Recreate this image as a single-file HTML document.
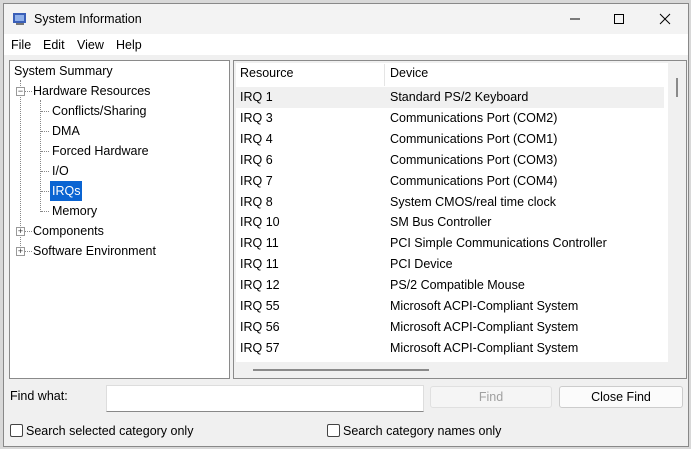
<!DOCTYPE html>
<html><head><style>
*{margin:0;padding:0;box-sizing:border-box}
body{width:691px;height:449px;background:#d8d8d8;font-family:"Liberation Sans",sans-serif;font-size:12.5px;color:#000;position:relative;overflow:hidden}
.win{position:absolute;left:3px;top:3px;width:686px;height:444px;background:#f0f0f0;border:1px solid #888}
.abs{position:absolute;white-space:nowrap}
.title{position:absolute;left:0;top:0;width:100%;height:30px;background:#f3f3f3}
.menu{position:absolute;left:0;top:30px;width:100%;height:21px;background:#fff}
.tree{position:absolute;left:5px;top:56px;width:221px;height:319px;background:#fff;border:1px solid #8a8a8a}
.tin{position:absolute;left:-3px;top:-1px;width:220px;height:300px}
.list{position:absolute;left:229px;top:56px;width:454px;height:319px;background:#f0f0f0;border:1px solid #8a8a8a}
.row{position:absolute;left:2px;width:428px;height:21px;line-height:21px}
.row span{position:absolute;left:4px}
.row b{font-weight:normal;position:absolute;left:154px}
.dv{position:absolute;border-left:1px dotted #888}
.dh{position:absolute;border-top:1px dotted #888}
.box{position:absolute;width:9px;height:9px;border:1px solid #999;background:#fff;font-size:9px;line-height:7px;text-align:center;color:#333}
.btn{position:absolute;height:22px;border:1px solid #ccc;border-radius:3px;background:#fbfbfb;text-align:center;line-height:20px}
.cb{position:absolute;width:13px;height:13px;border:1px solid #444;border-radius:2px;background:#fff}
</style></head><body>
<div class="win">
<div class="title">
<svg class="abs" style="left:8px;top:7px" width="16" height="16" viewBox="0 0 16 16"><rect x="1" y="2" width="13" height="10" fill="#3a5fb8"/><rect x="3" y="4" width="9" height="6" fill="#8fb0ea"/><rect x="4" y="12" width="8" height="2" fill="#777"/></svg>
<div class="abs" style="left:30px;top:8px">System Information</div>
<svg class="abs" style="left:565px;top:9px" width="12" height="12"><line x1="1" y1="6" x2="11" y2="6" stroke="#000"/></svg>
<svg class="abs" style="left:609px;top:9px" width="12" height="12"><rect x="1.5" y="1.5" width="9" height="9" fill="none" stroke="#000"/></svg>
<svg class="abs" style="left:655px;top:9px" width="12" height="12"><path d="M1 1L11 11M11 1L1 11" stroke="#000"/></svg>
</div>
<div class="menu">
<div class="abs" style="left:7px;top:4px">File</div>
<div class="abs" style="left:39px;top:4px">Edit</div>
<div class="abs" style="left:73px;top:4px">View</div>
<div class="abs" style="left:112px;top:4px">Help</div>
</div>
<div class="tree"><div class="tin">
<div class="dv" style="left:13px;top:20px;height:172px"></div>
<div class="dv" style="left:33px;top:40px;height:112px"></div>
<div class="dh" style="left:18px;top:31px;width:7px"></div>
<div class="dh" style="left:18px;top:171px;width:7px"></div>
<div class="dh" style="left:18px;top:191px;width:7px"></div>
<div class="dh" style="left:34px;top:51px;width:8px"></div>
<div class="dh" style="left:34px;top:71px;width:8px"></div>
<div class="dh" style="left:34px;top:91px;width:8px"></div>
<div class="dh" style="left:34px;top:111px;width:8px"></div>
<div class="dh" style="left:34px;top:131px;width:8px"></div>
<div class="dh" style="left:34px;top:151px;width:8px"></div>
<div class="box" style="left:9px;top:27px">−</div>
<div class="box" style="left:9px;top:167px">+</div>
<div class="box" style="left:9px;top:187px">+</div>
<div class="abs" style="left:7px;top:4px">System Summary</div>
<div class="abs" style="left:26px;top:24px">Hardware Resources</div>
<div class="abs" style="left:45px;top:44px">Conflicts/Sharing</div>
<div class="abs" style="left:45px;top:64px">DMA</div>
<div class="abs" style="left:45px;top:84px">Forced Hardware</div>
<div class="abs" style="left:45px;top:104px">I/O</div>
<div class="abs" style="left:43px;top:121px;background:#0a64d2;color:#fff;padding:3px 2px;height:20px">IRQs</div>
<div class="abs" style="left:45px;top:144px">Memory</div>
<div class="abs" style="left:26px;top:164px">Components</div>
<div class="abs" style="left:26px;top:184px">Software Environment</div>
</div></div>
<div class="list">
<div style="position:absolute;left:2px;top:2px;width:432px;height:299px;background:#fff"></div>
<div class="row" style="top:0px;height:24px;line-height:24px"><span>Resource</span><b>Device</b></div>
<div style="position:absolute;left:150px;top:3px;height:22px;border-left:1px solid #e5e5e5"></div>
<div class="row" style="top:26px;background:#f0f0f0"><span>IRQ 1</span><b>Standard PS/2 Keyboard</b></div>
<div class="row" style="top:47px"><span>IRQ 3</span><b>Communications Port (COM2)</b></div>
<div class="row" style="top:68px"><span>IRQ 4</span><b>Communications Port (COM1)</b></div>
<div class="row" style="top:89px"><span>IRQ 6</span><b>Communications Port (COM3)</b></div>
<div class="row" style="top:110px"><span>IRQ 7</span><b>Communications Port (COM4)</b></div>
<div class="row" style="top:131px"><span>IRQ 8</span><b>System CMOS/real time clock</b></div>
<div class="row" style="top:151px"><span>IRQ 10</span><b>SM Bus Controller</b></div>
<div class="row" style="top:172px"><span>IRQ 11</span><b>PCI Simple Communications Controller</b></div>
<div class="row" style="top:193px"><span>IRQ 11</span><b>PCI Device</b></div>
<div class="row" style="top:214px"><span>IRQ 12</span><b>PS/2 Compatible Mouse</b></div>
<div class="row" style="top:235px"><span>IRQ 55</span><b>Microsoft ACPI-Compliant System</b></div>
<div class="row" style="top:256px"><span>IRQ 56</span><b>Microsoft ACPI-Compliant System</b></div>
<div class="row" style="top:277px;height:22px;overflow:hidden"><span>IRQ 57</span><b>Microsoft ACPI-Compliant System</b></div>
<div style="position:absolute;left:442px;top:17px;width:2px;height:19px;background:#8a8a8a"></div>
<div style="position:absolute;left:19px;top:308px;width:176px;height:2px;background:#8a8a8a"></div>
</div>
<div class="abs" style="left:6px;top:385px">Find what:</div>
<div style="position:absolute;left:102px;top:381px;width:318px;height:27px;background:#fff;border:1px solid #ddd;border-bottom:1px solid #888"></div>
<div class="btn" style="left:426px;top:382px;width:122px;color:#a0a0a0;background:#f5f5f5;border-color:#e0e0e0">Find</div>
<div class="btn" style="left:555px;top:382px;width:124px">Close Find</div>
<div class="cb" style="left:6px;top:420px"></div>
<div class="abs" style="left:22px;top:420px">Search selected category only</div>
<div class="cb" style="left:323px;top:420px"></div>
<div class="abs" style="left:339px;top:420px">Search category names only</div>
</div>
</body></html>
